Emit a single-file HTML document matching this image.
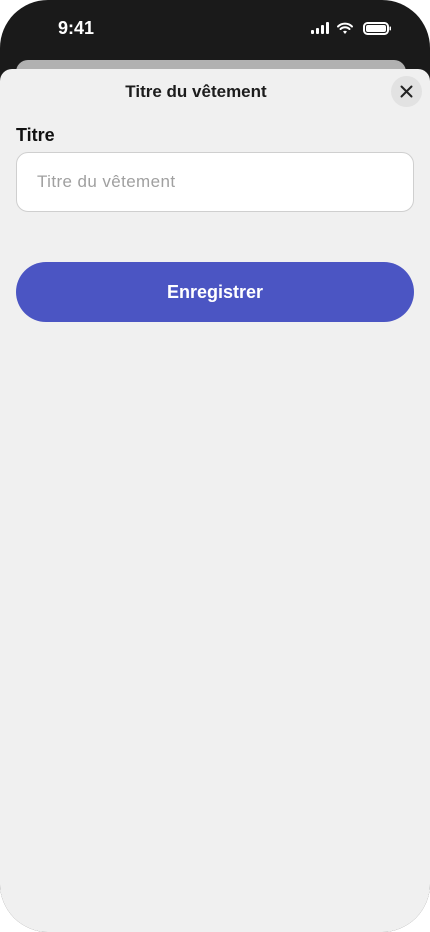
<!DOCTYPE html>
<html><head><meta charset="utf-8"><style>
*{margin:0;padding:0;box-sizing:border-box}
body{width:430px;height:932px;background:#fff;font-family:"Liberation Sans",sans-serif;overflow:hidden}
.phone{position:absolute;left:0;top:0;width:430px;height:932px;border-radius:48px;background:#1a1a1a;overflow:hidden}
.time{position:absolute;left:58px;top:18px;color:#fff;font-size:18px;font-weight:600}
.back{position:absolute;left:16px;top:60px;width:390px;height:40px;background:#b1b1b1;border-radius:12px}
.sheet{position:absolute;left:0;top:69px;width:430px;height:863px;background:#f0f0f0;border-radius:12px 12px 40px 40px}
.title{position:absolute;top:13px;left:0;width:392px;text-align:center;font-size:17px;font-weight:bold;color:#1c1c1c}
.close{position:absolute;left:391px;top:7px;width:31px;height:31px;border-radius:50%;background:#e2e2e2}
.label{position:absolute;left:16px;top:56px;font-size:18px;font-weight:bold;color:#111}
.input{position:absolute;left:16px;top:83px;width:398px;height:60px;background:#fff;border:1px solid #cfcfcf;border-radius:12px;padding-left:20px;line-height:58px;font-size:17px;letter-spacing:0.4px;color:#a0a0a0}
.btn{position:absolute;left:16px;top:193px;width:398px;height:60px;background:#4b55c3;border-radius:30px;color:#fff;text-align:center;line-height:60px;font-size:18px;font-weight:bold}
</style></head><body>
<div class="phone">
<div class="time">9:41</div>
<svg style="position:absolute;left:311px;top:22px" width="82" height="14" viewBox="0 0 82 14">
<rect x="0" y="8" width="3" height="4" rx="1" fill="#fff"/><rect x="5" y="6" width="3" height="6" rx="1" fill="#fff"/><rect x="10" y="3" width="3" height="9" rx="1" fill="#fff"/><rect x="15" y="0" width="3" height="12" rx="1" fill="#fff"/>
<path d="M27 4.5a10 10 0 0 1 14 0M29.5 7a6.5 6.5 0 0 1 9 0" stroke="#fff" stroke-width="2" fill="none" stroke-linecap="round"/><path d="M32 9.5l2 2.5l2-2.5a3 3 0 0 0-4 0z" fill="#fff"/>
<rect x="53" y="1" width="24" height="11" rx="3.5" stroke="#fff" stroke-width="2" fill="none"/><rect x="55" y="3" width="20" height="7" rx="2" fill="#fff"/><rect x="78.5" y="4.5" width="1.5" height="4" rx="0.7" fill="#fff"/>
</svg>
<div class="back"></div>
<div class="sheet">
<div class="title">Titre du vêtement</div>
<div class="close"><svg width="31" height="31" viewBox="0 0 31 31"><path d="M10.5 10.5l10 10M20.5 10.5l-10 10" stroke="#222" stroke-width="2" stroke-linecap="round"/></svg></div>
<div class="label">Titre</div>
<div class="input">Titre du vêtement</div>
<div class="btn">Enregistrer</div>
</div>
</div>
</body></html>
